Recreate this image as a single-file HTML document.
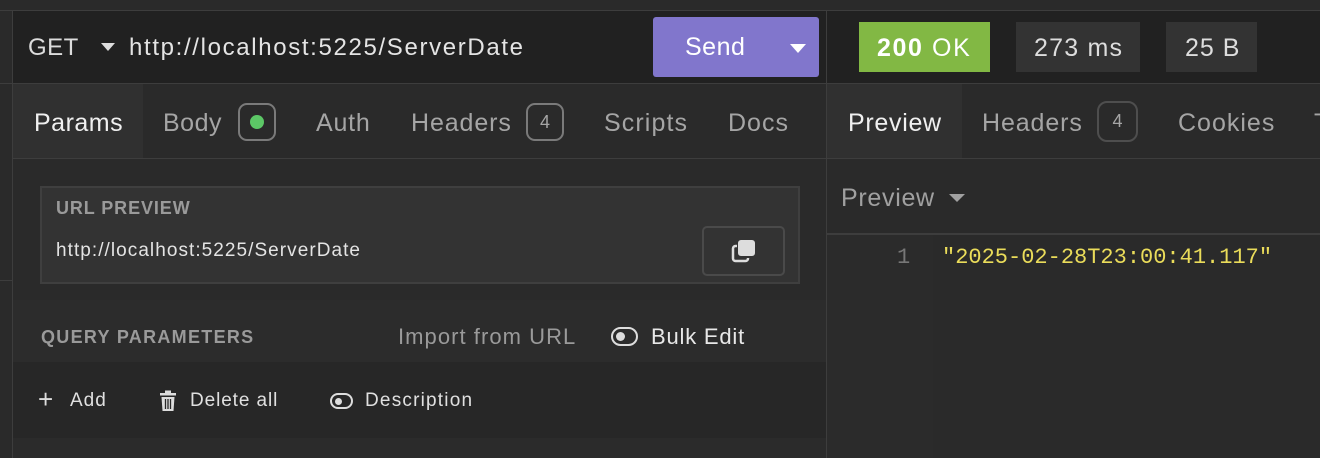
<!DOCTYPE html>
<html><head><meta charset="utf-8"><style>
*{margin:0;padding:0;box-sizing:border-box}
body{width:1320px;height:458px;background:#2a2a2a;position:relative;overflow:hidden;font-family:"Liberation Sans",sans-serif;color:#ddd}
.a{position:absolute}
.t{position:absolute;white-space:nowrap}
</style></head><body>
<div class="a" style="left:0;top:0;width:1320px;height:10px;background:#2a2a2a"></div>
<div class="a" style="left:0;top:10px;width:1320px;height:1px;background:#3d3d3d"></div>
<div class="a" style="left:12px;top:11px;width:1px;height:447px;background:#3d3d3d"></div>
<div class="a" style="left:0;top:83px;width:12px;height:1px;background:#3d3d3d"></div>
<div class="a" style="left:0;top:280px;width:12px;height:1px;background:#3d3d3d"></div>
<div class="a" style="left:13px;top:11px;width:1307px;height:72px;background:#212121"></div>
<div class="a" style="left:826px;top:11px;width:1px;height:447px;background:#3d3d3d"></div>
<div class="a" style="left:13px;top:83px;width:1307px;height:1px;background:#3d3d3d"></div>
<div class="t" style="left:28px;top:34px;font-size:24px;color:#dcdcdc;letter-spacing:0.5px">GET</div>
<svg class="a" style="left:100px;top:42px" width="16" height="10"><path d="M1 1h14l-7 8z" fill="#ddd"/></svg>
<div class="t" style="left:129px;top:34px;font-size:24px;color:#e4e4e4;letter-spacing:1.65px">http://localhost:5225/ServerDate</div>
<div class="a" style="left:653px;top:17px;width:166px;height:60px;background:#8176cc;border-radius:3px"></div>
<div class="t" style="left:685px;top:33px;font-size:25px;color:#fff;letter-spacing:0.5px">Send</div>
<svg class="a" style="left:789px;top:43px" width="18" height="11"><path d="M1 1h16l-8 9z" fill="#fff"/></svg>
<div class="a" style="left:859px;top:22px;width:131px;height:50px;background:#82b844"></div>
<div class="t" style="left:877px;top:34px;font-size:25px;color:#fff;letter-spacing:1.6px"><b>200</b> OK</div>
<div class="a" style="left:1016px;top:22px;width:124px;height:50px;background:#333"></div>
<div class="t" style="left:1034px;top:34px;font-size:25px;color:#ddd;letter-spacing:1.2px">273 ms</div>
<div class="a" style="left:1166px;top:22px;width:91px;height:50px;background:#333"></div>
<div class="t" style="left:1185px;top:34px;font-size:25px;color:#ddd;letter-spacing:1px">25 B</div>
<div class="a" style="left:13px;top:84px;width:813px;height:74px;background:#2a2a2a"></div>
<div class="a" style="left:13px;top:84px;width:130px;height:74px;background:#303030"></div>
<div class="a" style="left:13px;top:158px;width:1307px;height:1px;background:#3d3d3d"></div>
<div class="t" style="left:34px;top:109px;font-size:25px;color:#f0f0f0;letter-spacing:0.5px">Params</div>
<div class="t" style="left:163px;top:109px;font-size:25px;color:#a5a5a5;letter-spacing:0.5px">Body</div>
<div class="a" style="left:238px;top:103px;width:38px;height:38px;border:2px solid #7a7a7a;border-radius:9px"></div>
<div class="a" style="left:250px;top:115px;width:14px;height:14px;border-radius:50%;background:#5cc766"></div>
<div class="t" style="left:316px;top:109px;font-size:25px;color:#a5a5a5;letter-spacing:0.8px">Auth</div>
<div class="t" style="left:411px;top:109px;font-size:25px;color:#a5a5a5;letter-spacing:0.9px">Headers</div>
<div class="a" style="left:526px;top:103px;width:38px;height:38px;border:2px solid #7a7a7a;border-radius:9px;font-size:18px;color:#a5a5a5;text-align:center;line-height:34px">4</div>
<div class="t" style="left:604px;top:109px;font-size:25px;color:#a5a5a5;letter-spacing:1.1px">Scripts</div>
<div class="t" style="left:728px;top:109px;font-size:25px;color:#a5a5a5;letter-spacing:1px">Docs</div>
<div class="a" style="left:40px;top:186px;width:760px;height:98px;background:#333;border:2px solid #3f3f3f"></div>
<div class="t" style="left:56px;top:198px;font-size:18px;font-weight:bold;color:#9a9a9a;letter-spacing:0.9px">URL PREVIEW</div>
<div class="t" style="left:56px;top:240px;font-size:19px;color:#e4e4e4;letter-spacing:1.05px">http://localhost:5225/ServerDate</div>
<div class="a" style="left:702px;top:226px;width:83px;height:50px;border:2px solid #4a4a4a;border-radius:5px"></div>
<svg class="a" style="left:730px;top:237px" width="28" height="28" viewBox="0 0 28 28"><rect x="8" y="3" width="17" height="16" rx="3" fill="#ddd"/><path d="M7 9H5.5a2.5 2.5 0 0 0-2.5 2.5v10A2.5 2.5 0 0 0 5.5 24h10a2.5 2.5 0 0 0 2.5-2.5V21" fill="none" stroke="#ddd" stroke-width="2.5"/></svg>
<div class="a" style="left:13px;top:300px;width:813px;height:62px;background:#2c2c2c"></div>
<div class="t" style="left:41px;top:327px;font-size:18px;font-weight:bold;color:#9a9a9a;letter-spacing:1.3px">QUERY PARAMETERS</div>
<div class="t" style="left:398px;top:324px;font-size:22px;color:#9a9a9a;letter-spacing:1.05px">Import from URL</div>
<div class="a" style="left:611px;top:327px;width:27px;height:19px;border:2.5px solid #ddd;border-radius:10px"></div>
<div class="a" style="left:616px;top:332px;width:9px;height:9px;border-radius:50%;background:#ddd"></div>
<div class="t" style="left:651px;top:324px;font-size:22px;color:#e8e8e8;letter-spacing:0.8px">Bulk Edit</div>
<div class="a" style="left:13px;top:362px;width:813px;height:76px;background:#272727"></div>
<div class="t" style="left:38px;top:386px;font-size:26px;color:#ddd;line-height:26px">+</div>
<div class="t" style="left:70px;top:390px;font-size:19px;color:#e0e0e0;letter-spacing:1px">Add</div>
<svg class="a" style="left:159px;top:390px" width="18" height="22" viewBox="0 0 18 22"><rect x="1" y="3" width="16" height="2.5" fill="#ddd"/><rect x="6" y="0.5" width="6" height="3" fill="#ddd"/><path d="M2.5 7h13l-1 14h-11z" fill="#ddd"/><path d="M6.5 9v10M9 9v10M11.5 9v10" stroke="#272727" stroke-width="1.3"/></svg>
<div class="t" style="left:190px;top:390px;font-size:19px;color:#e0e0e0;letter-spacing:0.9px">Delete all</div>
<div class="a" style="left:330px;top:393px;width:23px;height:16px;border:2.5px solid #ddd;border-radius:8px"></div>
<div class="a" style="left:335px;top:398px;width:7px;height:7px;border-radius:50%;background:#ddd"></div>
<div class="t" style="left:365px;top:390px;font-size:19px;color:#e0e0e0;letter-spacing:1.2px">Description</div>
<div class="a" style="left:13px;top:438px;width:813px;height:20px;background:#2b2b2b"></div>
<div class="a" style="left:827px;top:84px;width:493px;height:74px;background:#2a2a2a"></div>
<div class="a" style="left:827px;top:84px;width:135px;height:74px;background:#303030"></div>
<div class="t" style="left:848px;top:109px;font-size:25px;color:#f0f0f0;letter-spacing:0.7px">Preview</div>
<div class="t" style="left:982px;top:109px;font-size:25px;color:#a5a5a5;letter-spacing:0.9px">Headers</div>
<div class="a" style="left:1097px;top:101px;width:41px;height:41px;border:2px solid #4e4e4e;border-radius:10px;font-size:18px;color:#a5a5a5;text-align:center;line-height:37px">4</div>
<div class="t" style="left:1178px;top:109px;font-size:25px;color:#a5a5a5;letter-spacing:1px">Cookies</div>
<div class="t" style="left:1314px;top:109px;font-size:25px;color:#a5a5a5">T</div>
<div class="t" style="left:841px;top:184px;font-size:25px;color:#a0a0a0;letter-spacing:0.7px">Preview</div>
<svg class="a" style="left:948px;top:193px" width="18" height="10"><path d="M1 1h16l-8 8z" fill="#a0a0a0"/></svg>
<div class="a" style="left:827px;top:233px;width:493px;height:2px;background:#3d3d3d"></div>
<div class="a" style="left:933px;top:235px;width:387px;height:223px;background:#2a2a2a"></div>
<div class="a" style="left:827px;top:235px;width:106px;height:223px;background:#2b2b2b"></div>
<div class="t" style="left:897px;top:245px;font-size:22px;font-family:'Liberation Mono',monospace;color:#777">1</div>
<div class="t" style="left:942px;top:245px;font-size:22px;font-family:'Liberation Mono',monospace;color:#eadc5a">"2025-02-28T23:00:41.117"</div>
</body></html>
